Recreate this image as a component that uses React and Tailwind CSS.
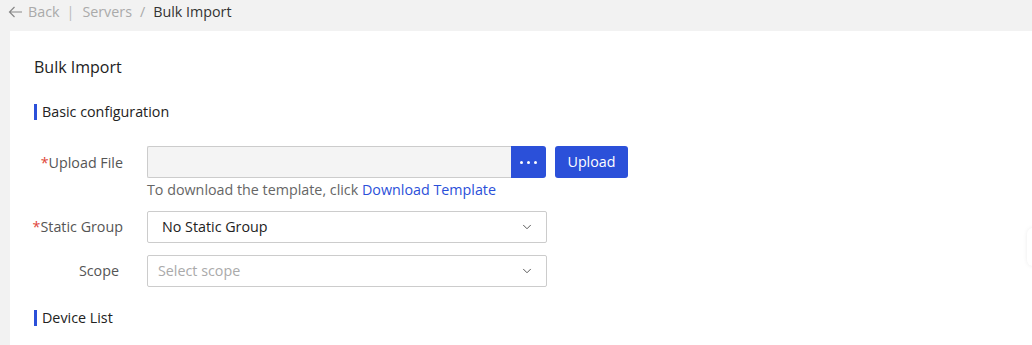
import { ChevronDown } from "lucide-react";

const font = { fontFamily: '"Open Sans", "Noto Sans", Arial, sans-serif' };

function SectionTitle({ children }) {
  return (
    <div className="flex items-center h-4">
      <span className="w-[3px] h-4 bg-[#2b50d9]" />
      <span className="ml-[5px] text-[14.3px] text-[#222] leading-4">{children}</span>
    </div>
  );
}

function Label({ required, children, className = "" }) {
  return (
    <div className={"w-[95px] -ml-[6px] text-right text-[14.3px] text-[#555] shrink-0 whitespace-nowrap " + className}>
      {required && <span className="text-[#e0453a]">*</span>}
      {children}
    </div>
  );
}

export default function App() {
  return (
    <div className="w-[1032px] h-[345px] bg-[#f2f2f2] overflow-hidden relative" style={font}>
      {/* breadcrumb */}
      <div className="h-[31px] flex items-start pt-[2px] pl-[8px] text-[14.3px] leading-5">
        <svg width="15" height="12" viewBox="0 0 15 12" className="mt-[4px] text-[#888]" fill="none" stroke="currentColor" strokeWidth="1.2">
          <path d="M14 6H1.5M6.5 1L1.5 6l5 5" />
        </svg>
        <span className="ml-[5px] text-[#aaa]">Back</span>
        <span className="ml-[7px] text-[#bbb]">|</span>
        <span className="ml-[8px] text-[#aaa]">Servers</span>
        <span className="ml-[8px] text-[#aaa]">/</span>
        <span className="ml-[8px] text-[#333]">Bulk Import</span>
      </div>

      {/* card */}
      <div className="ml-[10px] bg-white h-[314px] pl-[24px] pt-[26px]">
        <div className="text-[16px] text-[#222] leading-5">Bulk Import</div>

        <div className="mt-[27px]">
          <SectionTitle>Basic configuration</SectionTitle>
        </div>

        <div className="mt-[26px] flex">
          <Label required className="mt-[6px]">Upload File</Label>
          <div className="ml-[24px]">
            <div className="flex h-[32px]">
              <div className="w-[364px] h-[32px] bg-[#f4f4f4] border border-[#ccc] border-r-0 rounded-l-[2px]" />
              <button className="w-[35px] h-[32px] bg-[#2b50d9] rounded-r-[3px] flex items-center justify-center gap-[4px]">
                <span className="w-[3px] h-[3px] bg-white rounded-full" />
                <span className="w-[3px] h-[3px] bg-white rounded-full" />
                <span className="w-[3px] h-[3px] bg-white rounded-full" />
              </button>
              <button className="ml-[9px] w-[73px] h-[32px] bg-[#2b50d9] rounded-[3px] text-white text-[14.3px]">
                Upload
              </button>
            </div>
            <div className="mt-[2px] text-[14.3px] text-[#666] leading-5">
              To download the template, click <span className="text-[#2b50d9]">Download Template</span>
            </div>
          </div>
        </div>

        <div className="mt-[11px] flex items-center">
          <Label required>Static Group</Label>
          <div className="ml-[24px] w-[400px] h-[32px] border border-[#ccc] rounded-[2px] flex items-center justify-between pl-[14px] pr-[12px]">
            <span className="text-[14.3px] text-[#222]">No Static Group</span>
            <ChevronDown size={14} strokeWidth={1.5} className="text-[#444]" />
          </div>
        </div>

        <div className="mt-[12px] flex items-center">
          <Label className="pr-[4px]">Scope</Label>
          <div className="ml-[24px] w-[400px] h-[32px] border border-[#ccc] rounded-[2px] flex items-center justify-between pl-[10px] pr-[12px]">
            <span className="text-[14.3px] text-[#aaa]">Select scope</span>
            <ChevronDown size={14} strokeWidth={1.5} className="text-[#444]" />
          </div>
        </div>

        <div className="mt-[23px]">
          <SectionTitle>Device List</SectionTitle>
        </div>
      </div>

      <div className="absolute left-[1027px] top-[228px] w-[12px] h-[38px] bg-white rounded-l-[6px] shadow-[0_0_4px_rgba(0,0,0,0.08)]" />
    </div>
  );
}
